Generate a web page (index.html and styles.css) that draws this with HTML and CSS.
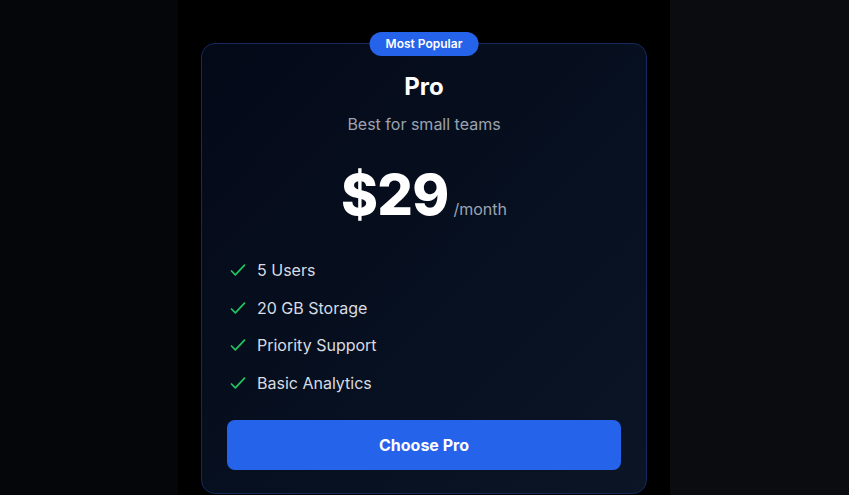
FILE: index.html
```html
<!DOCTYPE html>
<html lang="en">
<head>
<meta charset="utf-8">
<title>Pro Plan</title>
<link rel="stylesheet" href="styles.css">
</head>
<body>
<div class="page">
  <div class="side side-left"></div>
  <main class="stage">
    <section class="card">
      <span class="badge">Most Popular</span>
      <h2 class="title">Pro</h2>
      <p class="subtitle">Best for small teams</p>
      <div class="price">
        <span class="amount">$29</span>
        <span class="period">/month</span>
      </div>
      <ul class="features">
        <li><svg class="check" viewBox="0 0 16 16"><path d="M1.5 9 L5.3 12.8 L14.5 3.2"/></svg>5 Users</li>
        <li><svg class="check" viewBox="0 0 16 16"><path d="M1.5 9 L5.3 12.8 L14.5 3.2"/></svg>20 GB Storage</li>
        <li><svg class="check" viewBox="0 0 16 16"><path d="M1.5 9 L5.3 12.8 L14.5 3.2"/></svg>Priority Support</li>
        <li><svg class="check" viewBox="0 0 16 16"><path d="M1.5 9 L5.3 12.8 L14.5 3.2"/></svg>Basic Analytics</li>
      </ul>
      <button class="cta">Choose Pro</button>
    </section>
  </main>
  <div class="side side-right"></div>
</div>
</body>
</html>
```

FILE: styles.css
```css
* { box-sizing: border-box; }
html, body {
  margin: 0;
  padding: 0;
  height: 100%;
  background: #000;
  font-family: Inter, "Noto Sans", "Liberation Sans", sans-serif;
}
.page {
  display: flex;
  height: 495px;
  overflow: hidden;
}
.side-left {
  width: 178px;
  background: #050609;
}
.side-right {
  flex: 1;
  background: #0b0c0f;
}
.stage {
  width: 492px;
  background: #000;
  display: flex;
  justify-content: center;
  padding-top: 43px;
}
.card {
  position: relative;
  width: 446px;
  height: 451px;
  border: 1px solid #16295c;
  border-radius: 14px;
  background: linear-gradient(135deg, #040918 0%, #071020 55%, #0b1526 100%);
  padding: 29px 25px 23px;
  display: flex;
  flex-direction: column;
  align-items: center;
}
.badge {
  position: absolute;
  top: -12px;
  left: 50%;
  transform: translateX(-50%);
  height: 24px;
  line-height: 24px;
  padding: 0 16px;
  border-radius: 999px;
  background: #2563eb;
  color: #fff;
  font-size: 12px;
  font-weight: 600;
  white-space: nowrap;
}
.title {
  margin: 0;
  font-size: 24px;
  line-height: 28px;
  font-weight: 700;
  color: #fff;
}
.subtitle {
  margin: 12px 0 0;
  font-size: 16px;
  line-height: 22px;
  color: #9ca3af;
}
.price {
  margin-top: 32px;
  display: flex;
  align-items: baseline;
  gap: 5px;
}
.amount {
  font-size: 56px;
  line-height: 56px;
  font-weight: 800;
  color: #fff;
  letter-spacing: -0.8px;
}
.period {
  font-size: 16px;
  line-height: 22px;
  color: #9ca3af;
}
.features {
  list-style: none;
  margin: 36px 0 0;
  padding: 0 0 0 3px;
  align-self: stretch;
  display: flex;
  flex-direction: column;
  gap: 15.5px;
}
.features li {
  display: flex;
  align-items: center;
  gap: 11px;
  font-size: 16px;
  line-height: 22px;
  font-weight: 400;
  color: #d8dce2;
}
.check {
  width: 16px;
  height: 16px;
  flex: none;
  fill: none;
  stroke: #22c55e;
  stroke-width: 1.7;
  stroke-linecap: round;
  stroke-linejoin: round;
}
.cta {
  margin-top: 26px;
  align-self: stretch;
  height: 50px;
  border: none;
  border-radius: 8px;
  background: #2563eb;
  color: #fff;
  font-family: inherit;
  font-size: 16px;
  font-weight: 700;
  cursor: pointer;
}
```
